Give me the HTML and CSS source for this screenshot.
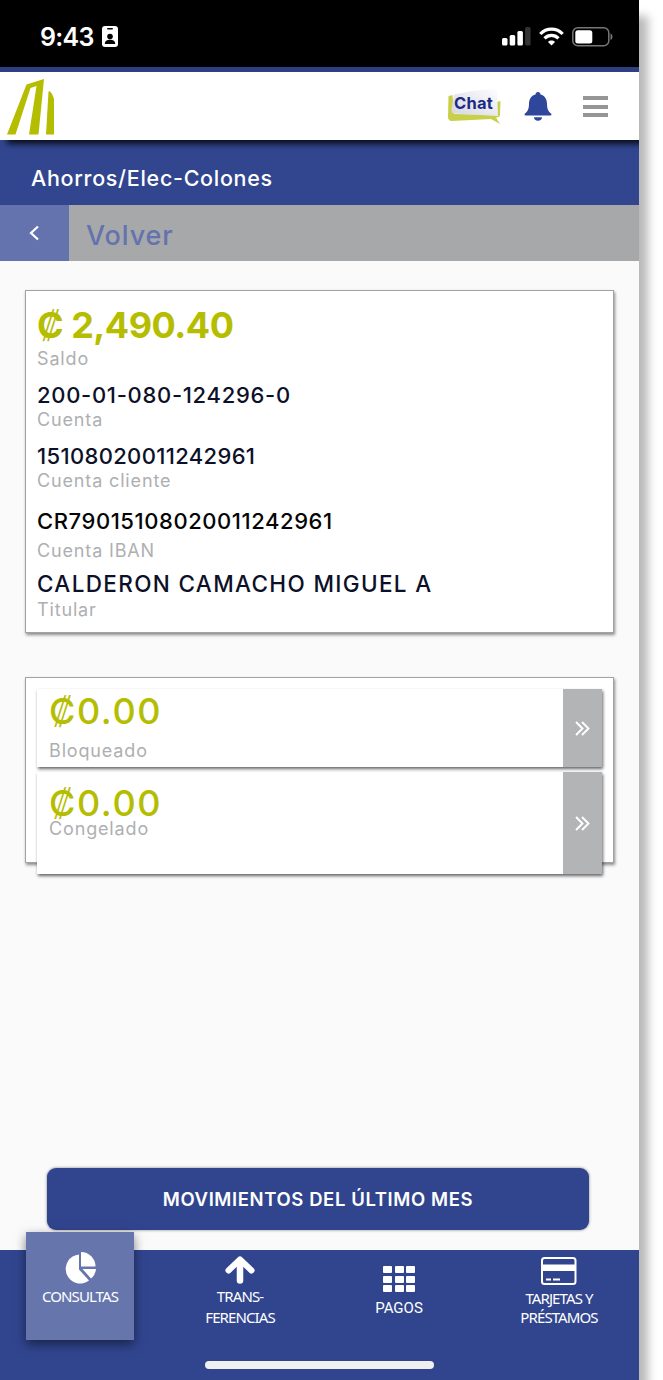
FILE: index.html
```html
<!DOCTYPE html>
<html lang="es">
<head>
  <meta charset="UTF-8">
  <meta name="viewport" content="width=device-width, initial-scale=1.0">
  <title>Ahorros/Elec-Colones</title>
  <link rel="stylesheet" href="styles.css">
</head>
<body>
  <div class="phone">
    <div class="status-bar">
      <div class="status-left">
        <span class="time">9:43</span>
        <svg class="icon-id" width="16" height="21" viewBox="0 0 16 21">
          <rect width="16" height="21" rx="3" fill="#fff"/>
          <rect x="5" y="2" width="6" height="1.6" rx=".8" fill="#000"/>
          <circle cx="8" cy="10.500" r="2.800" fill="#000"/>
          <path d="M2.800 18c0-3 2.200-4.200 5.200-4.200s5.200 1.200 5.200 4.200z" fill="#000"/>
        </svg>
      </div>
      <div class="status-right">
        <svg width="29" height="19" viewBox="0 0 29 19" fill="#fff">
          <rect x="0" y="11" width="5.500" height="7.500" rx="1.500"/>
          <rect x="7.700" y="8" width="5.500" height="10.500" rx="1.500"/>
          <rect x="15.400" y="4" width="5.500" height="14.500" rx="1.500"/>
          <rect x="23.100" y="0" width="5.500" height="18.500" rx="1.500" fill="#333"/>
        </svg>
        <svg width="25" height="19" viewBox="0 0 25 19" fill="none" stroke="#fff" stroke-width="3.200">
          <path d="M1.300 7C7.500 .4 17.500 .4 23.700 7"/>
          <path d="M5.500 11.300c4-4 10-4 14 0"/>
          <path d="M12.500 18.500l-3.500-3.600c2-1.900 5-1.900 7 0z" fill="#fff" stroke="none"/>
        </svg>
        <svg width="41" height="20" viewBox="0 0 41 20">
          <rect x=".8" y=".8" width="36" height="18" rx="5" fill="none" stroke="#777" stroke-width="1.500"/>
          <rect x="3.300" y="3.200" width="17" height="13.200" rx="2.500" fill="#fff"/>
          <path d="M38.500 6.500c2.600 1 2.600 5.600 0 6.600z" fill="#777"/>
        </svg>
      </div>
    </div>

    <header class="app-header">
      <svg class="logo" width="48" height="56" viewBox="0 0 48 56" fill="#b5bd00">
        <path d="M0 55.500L19.500 5.500 37 0 31.500 55.500H22L29.500 7 23.500 9 8.500 55.500z"/>
        <path d="M39 55.500L41.500 12.500Q44 11 47 20V55.500z"/>
      </svg>
      <div class="header-actions">
        <div class="chat">
          <svg width="55" height="37" viewBox="0 0 55 37">
            <defs>
              <linearGradient id="bubble" x1="0" y1="1" x2="1" y2="0">
                <stop offset="0" stop-color="#d3d5e3"/>
                <stop offset=".8" stop-color="#f6f6fa"/>
                <stop offset="1" stop-color="#fff"/>
              </linearGradient>
            </defs>
            <path d="M1.500 8l4-1L7 26l43 1V14l3.500-1-.5 14q0 2-4 2.500l4 6.500L44 31 5 33q-4 0-4-4z" fill="#c8d04a"/>
            <path d="M7 6.500Q28 2 50 0L51 28 7 25.500Q4.500 25 4.500 22z" fill="url(#bubble)"/>
          </svg>
          <span>Chat</span>
        </div>
        <svg class="bell" width="28" height="29" viewBox="0 0 28 29" fill="#2f479a">
          <path d="M14 0c1.500 0 2.500 1 2.500 2.500 4.500 1.200 6.500 5 6.500 9.500 0 5 1.500 7.500 4 9.500q1.500 2-1 2H2q-2.500 0-1-2c2.500-2 4-4.500 4-9.500 0-4.500 2-8.300 6.500-9.500C11.500 1 12.500 0 14 0z"/>
          <path d="M10 25.300h8c0 2-1.500 3.400-4 3.400s-4-1.400-4-3.400z"/>
        </svg>
        <div class="menu"><i></i><i></i><i></i></div>
      </div>
    </header>

    <div class="page-title">Ahorros/Elec-Colones</div>
    <div class="back-row">
      <div class="back-button">
        <svg width="11" height="16" viewBox="0 0 11 16" fill="none" stroke="#fff" stroke-width="2.200"><path d="M9 1.500L2 8l7 6.500"/></svg>
      </div>
      <div class="back-label">Volver</div>
    </div>

    <main class="content">
      <section class="card account">
        <div class="balance">₡ 2,490.40</div>
        <div class="label">Saldo</div>
        <div class="value number">200-01-080-124296-0</div>
        <div class="label">Cuenta</div>
        <div class="value client">15108020011242961</div>
        <div class="label">Cuenta cliente</div>
        <div class="value iban">CR79015108020011242961</div>
        <div class="label iban-label">Cuenta IBAN</div>
        <div class="value holder">CALDERON CAMACHO MIGUEL A</div>
        <div class="label">Titular</div>
      </section>

      <section class="card details">
        <div class="row blocked">
          <div class="row-text">
            <div class="amount">₡0.00</div>
            <div class="label">Bloqueado</div>
          </div>
          <div class="row-arrow">
            <svg width="15" height="15" viewBox="0 0 15 15" fill="none" stroke="#fff" stroke-width="1.900"><path d="M1 1l6.500 6.500L1 14M7 1l6.500 6.500L7 14"/></svg>
          </div>
        </div>
        <div class="row frozen">
          <div class="row-text">
            <div class="amount">₡0.00</div>
            <div class="label">Congelado</div>
          </div>
          <div class="row-arrow">
            <svg width="15" height="15" viewBox="0 0 15 15" fill="none" stroke="#fff" stroke-width="1.900"><path d="M1 1l6.500 6.500L1 14M7 1l6.500 6.500L7 14"/></svg>
          </div>
        </div>
      </section>

      <div class="movements">MOVIMIENTOS DEL ÚLTIMO MES</div>
    </main>

    <nav class="tab-bar">
      <div class="tab active">
        <svg width="33" height="32" viewBox="0 0 33 32" fill="#fff">
          <path d="M15 2.500V17.500L25 28.500A14.500 14.500 0 1 1 15 2.500z"/>
          <path d="M17 0A14.500 14.500 0 0 1 31.500 14.500H17z"/>
          <path d="M18.500 17H32a14 14 0 0 1-5 9.500z"/>
        </svg>
        <span>CONSULTAS</span>
      </div>
      <div class="tab transfers">
        <svg width="30" height="28" viewBox="0 0 30 28" fill="none" stroke="#fff" stroke-linecap="round" stroke-linejoin="round">
          <path d="M3.500 14.500L15 3.500l11.500 11" stroke-width="6"/>
          <path d="M15 5V24.500" stroke-width="6.500"/>
        </svg>
        <span>TRANS-<br>FERENCIAS</span>
      </div>
      <div class="tab payments">
        <div class="grid-icon"><i></i><i></i><i></i><i></i><i></i><i></i><i></i><i></i><i></i></div>
        <span>PAGOS</span>
      </div>
      <div class="tab cards">
        <svg width="36" height="28" viewBox="0 0 36 28">
          <rect x="1" y="1" width="33.500" height="26" rx="2.500" fill="none" stroke="#fff" stroke-width="2"/>
          <path d="M1 7.500h33.500v6.500H1zM5 21.500h5v2H5zM12 21.500h7v2h-7z" fill="#fff"/>
        </svg>
        <span>TARJETAS Y<br>PRÉSTAMOS</span>
      </div>
      <div class="home-indicator"></div>
    </nav>
  </div>
</body>
</html>
```
FILE: styles.css
```css
* {
  box-sizing: border-box;
}

body {
  margin: 0;
  background: #fff;
  font-family: Inter, "Open Sans", sans-serif;
  overflow: hidden;
}

svg {
  display: block;
}

.phone {
  width: 639px;
  height: 1380px;
  display: flex;
  flex-direction: column;
  background: #fafafa;
  box-shadow: 9px 16px 9px rgba(0, 0, 0, 0.28);
}

.status-bar {
  height: 72px;
  padding: 0 26px 0 40px;
  display: flex;
  justify-content: space-between;
  background: #000;
  border-bottom: 5px solid #2f4080;
}

.status-left {
  display: flex;
  gap: 8px;
}

.time {
  width: 54px;
  padding-top: 22px;
  font-size: 25px;
  font-weight: 600;
  line-height: 30px;
  letter-spacing: -0.7px;
  color: #fff;
}

.icon-id {
  margin-top: 26px;
}

.status-right {
  display: flex;
  gap: 8px;
  padding-top: 27px;
}

.app-header {
  height: 68px;
  display: flex;
  justify-content: space-between;
  padding: 7px 31px 0 7px;
  background: #fff;
  position: relative;
  box-shadow: 7px 4px 6px rgba(0, 0, 0, 0.8);
  clip-path: inset(0 0 -12px 0);
}

.header-actions {
  display: flex;
  align-items: flex-start;
}

.chat {
  position: relative;
  margin-top: 9px;
  margin-right: 22px;
}

.chat span {
  position: absolute;
  left: 7px;
  top: 6px;
  font-size: 16.5px;
  font-weight: 700;
  line-height: 18px;
  letter-spacing: 0.2px;
  color: #1c2a83;
}

.bell {
  margin-top: 13px;
  margin-right: 31px;
}

.menu {
  margin-top: 17px;
  width: 25px;
  display: flex;
  flex-direction: column;
  gap: 4.5px;
}

.menu i {
  height: 4px;
  background: #969696;
}

.page-title {
  height: 65px;
  padding-left: 31px;
  padding-top: 8px;
  background: #31468f;
  color: #fff;
  font-size: 21.5px;
  font-weight: 500;
  line-height: 60px;
  letter-spacing: 0.7px;
}

.back-row {
  height: 56px;
  display: flex;
  background: #a7a8aa;
}

.back-button {
  width: 69px;
  display: flex;
  align-items: center;
  justify-content: center;
  background: #6473ad;
}

.back-label {
  padding-left: 17px;
  padding-top: 2px;
  font-size: 27px;
  font-weight: 500;
  line-height: 58px;
  letter-spacing: 0.9px;
  color: #6473ad;
}

.content {
  height: 989px;
  padding-top: 29px;
}

.card {
  width: 589px;
  margin-left: 25px;
  background: #fff;
  border: 1px solid #a0a2a5;
  box-shadow: 1px 2px 3px rgba(0, 0, 0, 0.45);
}

.account {
  height: 343px;
  padding: 14px 11px 0;
}

.balance {
  height: 44px;
  font-size: 36px;
  font-weight: 700;
  line-height: 40px;
  letter-spacing: -0.5px;
  color: #b5bd00;
}

.label {
  font-size: 18px;
  line-height: 20px;
  letter-spacing: 0.85px;
  color: #aeafb1;
}

.value {
  margin: 13px 0 2px;
  font-size: 22px;
  font-weight: 500;
  line-height: 26px;
  color: #0c1028;
  white-space: nowrap;
}

.number {
  letter-spacing: 0.7px;
}

.client {
  letter-spacing: 0.35px;
}

.iban {
  margin: 17px 0 7px;
  letter-spacing: 0.57px;
  color: #050505;
}

.holder {
  margin: 10px 0 3px;
  font-size: 22.5px;
  letter-spacing: 1.35px;
}

.details {
  height: 186px;
  margin-top: 44px;
  padding: 11px 11px 0;
}

.row {
  width: 565px;
  display: flex;
  background: #fff;
  box-shadow: 1px 2px 3px rgba(0, 0, 0, 0.6);
}

.row-text {
  flex: 1;
  padding-left: 12px;
}

.amount {
  font-size: 36px;
  font-weight: 500;
  line-height: 34px;
  letter-spacing: 1.6px;
  color: #b5bd00;
}

.row-arrow {
  width: 39px;
  display: flex;
  align-items: center;
  justify-content: center;
  background: #b2b4b6;
}

.blocked {
  height: 78px;
}

.blocked .amount {
  padding-top: 5px;
  margin-bottom: 13px;
}

.frozen {
  height: 102px;
  margin-top: 5px;
}

.frozen .amount {
  padding-top: 14px;
}

.frozen .label {
  line-height: 18px;
}

.movements {
  width: 542px;
  height: 62px;
  margin: 305px 0 0 47px;
  border-radius: 9px;
  background: #31458f;
  box-shadow: 0 0 3px rgba(0, 0, 0, 0.5);
  color: #fff;
  font-size: 18.5px;
  font-weight: 600;
  line-height: 62px;
  letter-spacing: 0.6px;
  text-align: center;
}

.tab-bar {
  position: relative;
  height: 130px;
  background: #31458f;
  display: grid;
  grid-template-columns: 26px 108px 212px 106px 187px;
  align-items: start;
  color: #fff;
  font-family: "Noto Sans", "Open Sans", sans-serif;
  font-size: 15px;
  line-height: 21px;
  text-align: center;
}

.tab {
  display: flex;
  flex-direction: column;
  align-items: center;
  letter-spacing: -0.9px;
}

.active {
  grid-column: 2;
  height: 108px;
  margin-top: -18px;
  padding-top: 20px;
  background: #6676ad;
  box-shadow: 0 4px 10px rgba(0, 0, 0, 0.5);
}

.active span {
  margin-top: 2px;
}

.transfers {
  padding-top: 6px;
}

.transfers span {
  margin-top: 2px;
}

.payments {
  padding-top: 16px;
  font-family: Roboto, sans-serif;
  letter-spacing: 0;
}

.payments span {
  margin-top: 6px;
}

.grid-icon {
  display: grid;
  grid-template-columns: repeat(3, 9px);
  grid-auto-rows: 7px;
  gap: 2.5px;
}

.grid-icon i {
  border-radius: 1px;
  background: #fff;
}

.cards {
  padding: 7px 0 0 27px;
  line-height: 19px;
}

.cards span {
  margin-top: 4px;
}

.home-indicator {
  position: absolute;
  left: 205px;
  bottom: 11px;
  width: 229px;
  height: 8px;
  border-radius: 4px;
  background: #f0f0f0;
}
```
